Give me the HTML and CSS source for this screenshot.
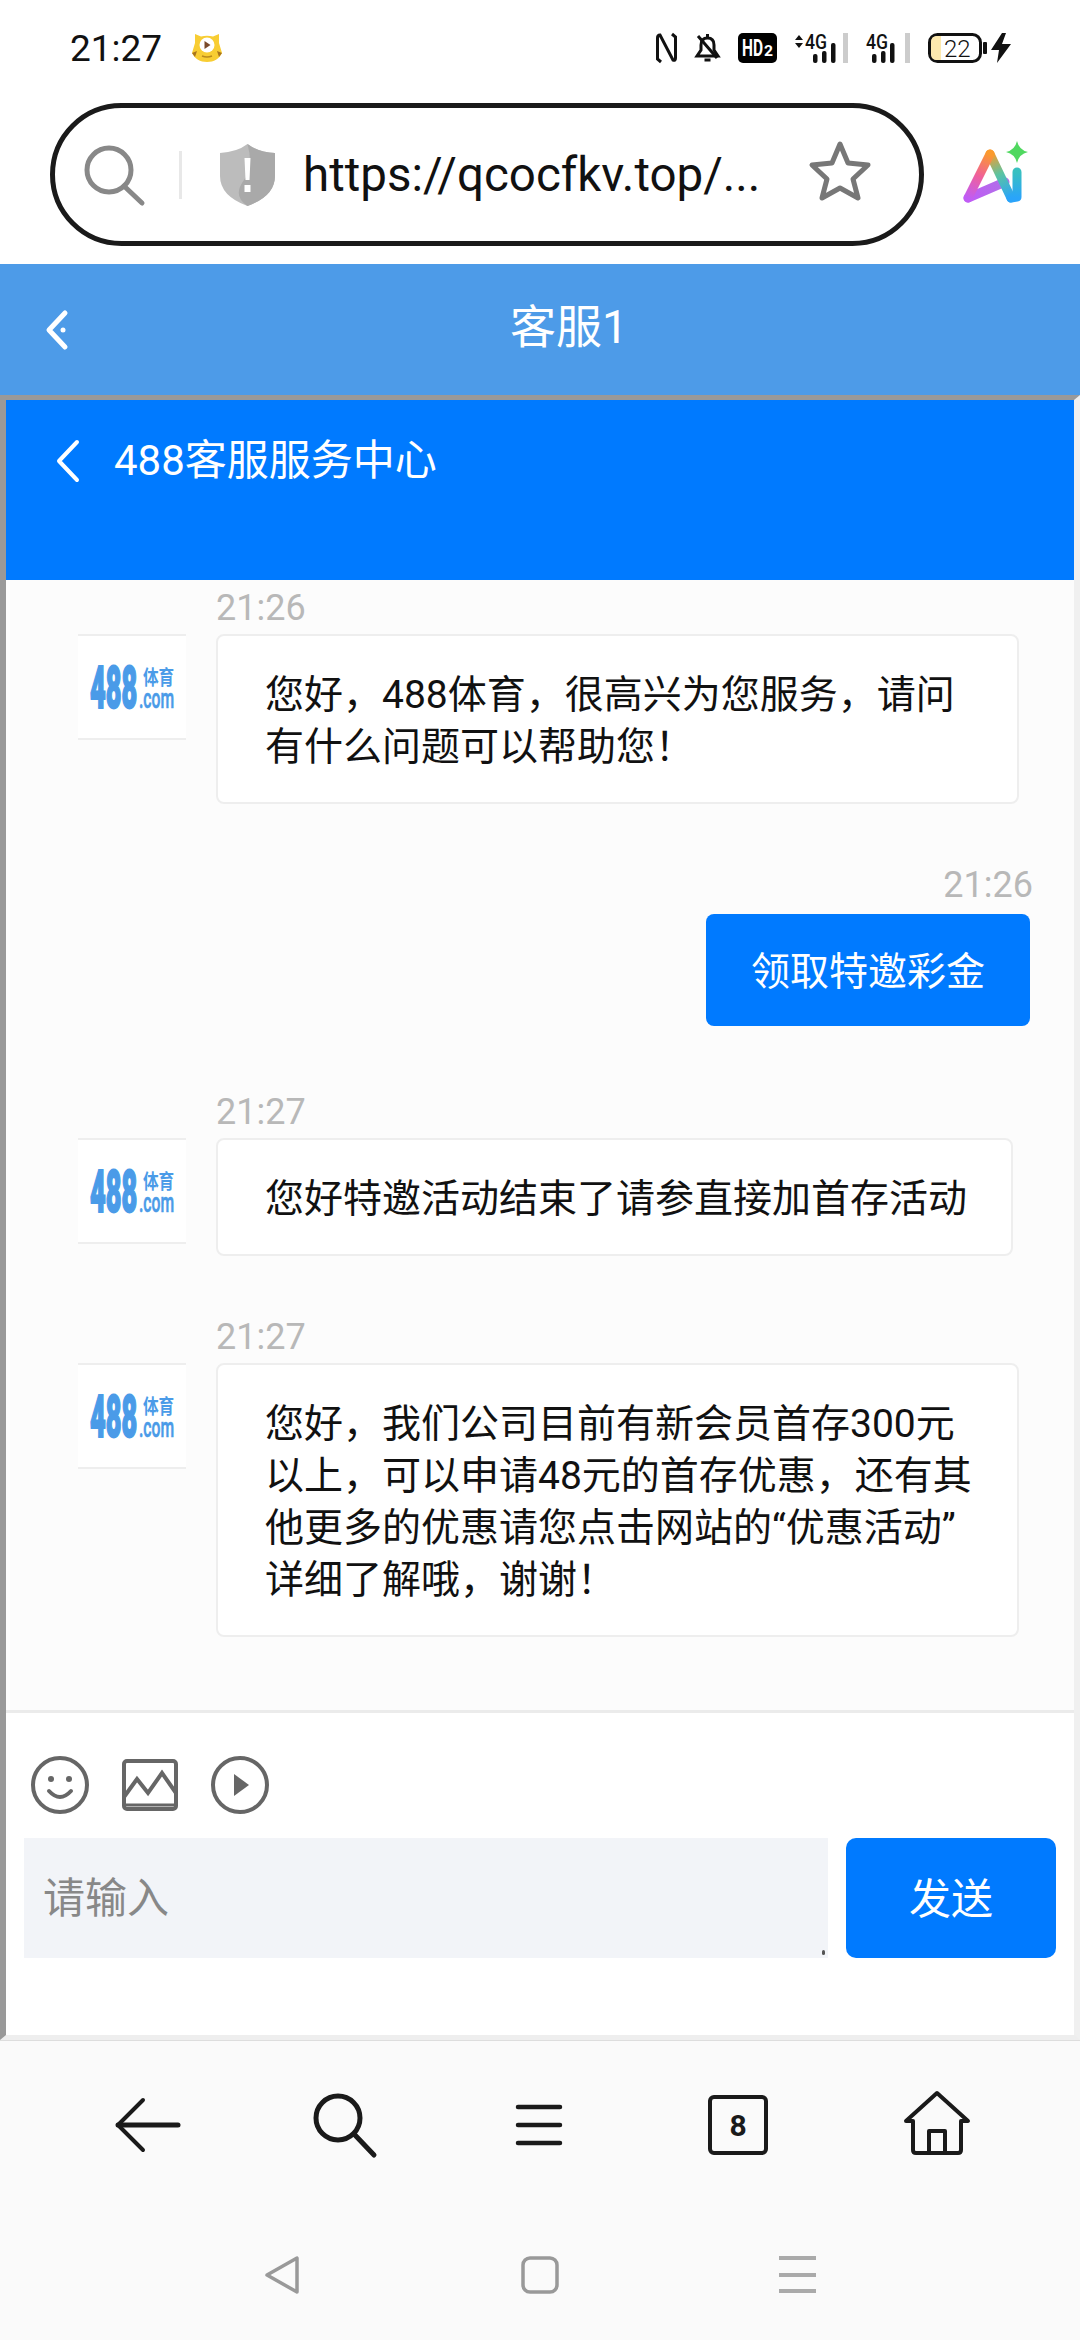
FILE: index.html
```html
<!DOCTYPE html>
<html lang="zh-CN">
<head>
    <meta charset="UTF-8">
    <meta name="viewport" content="width=device-width, initial-scale=1.0">
    <title>客服1</title>
    <link rel="stylesheet" href="styles.css">
</head>
<body>
    <!-- Status bar -->
    <div class="status-bar">
        <div class="status-left">
            <span class="clock">21:27</span>
            <svg class="mascot" width="30" height="28" viewBox="0 0 30 28">
                <path d="M3 0L9 2.500Q15 1 21 2.500L27 0L27 9L30 19C27 25 22 28 15 28S3 25 0 19L3 9Z" fill="#f8cd33"/>
                <path d="M0 19L3 23L5 17ZM30 19L27 23L25 17Z" fill="#a8741c"/>
                <circle cx="15" cy="11" r="7.500" fill="#fff"/>
                <path d="M12.500 7l6 4-6 4z" fill="#7a4a2a"/>
                <path d="M10 22q5 2 10 0" fill="none" stroke="#b98a1c" stroke-width="1.500"/>
            </svg>
        </div>
        <div class="status-right">
            <svg width="21" height="30" viewBox="0 0 21 30" fill="none" stroke="#111" stroke-width="3">
                <path d="M5 29L1.500 26V5Q1.500 2 4 2L17 27Q19.500 28 19.500 25V4L16 1"/>
            </svg>
            <svg width="25" height="30" viewBox="0 0 25 30" fill="none" stroke="#111" stroke-width="3">
                <path d="M6 12Q6 5 12.500 5T19 12V17L23 23H2L6 17Z"/>
                <path d="M3 3L22 25M12.500 1V4"/>
                <path d="M9.500 27h6" stroke-width="3"/>
            </svg>
            <svg width="39" height="30" viewBox="0 0 39 30">
                <rect width="39" height="30" rx="5" fill="#000"/>
                <text x="4" y="23" class="hd-text" textLength="21" lengthAdjust="spacingAndGlyphs">HD</text>
                <text x="26" y="23" class="hd-sub" textLength="9" lengthAdjust="spacingAndGlyphs">2</text>
            </svg>
            <svg width="53" height="30" viewBox="0 0 53 30">
                <path d="M0 7l4-5 4 5zM0 10l4 5 4-5z" fill="#111"/>
                <text x="10" y="16" class="net-text" textLength="22" lengthAdjust="spacingAndGlyphs">4G</text>
                <rect x="18" y="21" width="4.500" height="9" rx="2" fill="#111"/>
                <rect x="27" y="18" width="4.500" height="12" rx="2" fill="#111"/>
                <rect x="36" y="10" width="4.500" height="20" rx="2" fill="#111"/>
                <rect x="48" y="0" width="5" height="30" fill="#ccc"/>
            </svg>
            <svg width="44" height="30" viewBox="0 0 44 30">
                <text x="0" y="16" class="net-text" textLength="22" lengthAdjust="spacingAndGlyphs">4G</text>
                <rect x="6" y="21" width="4.500" height="9" rx="2" fill="#111"/>
                <rect x="15" y="18" width="4.500" height="12" rx="2" fill="#111"/>
                <rect x="24" y="10" width="4.500" height="20" rx="2" fill="#111"/>
                <rect x="39" y="0" width="5" height="30" fill="#ccc"/>
            </svg>
            <svg width="59" height="30" viewBox="0 0 59 30">
                <rect x="1.500" y="1.500" width="51" height="27" rx="8" fill="#fff" stroke="#111" stroke-width="3"/>
                <path d="M9 3h4v24H9q-6 0-6-6V9q0-6 6-6z" fill="#fde9ae"/>
                <text x="16" y="24" class="batt-text">22</text>
                <rect x="55" y="9" width="4" height="12" rx="1" fill="#111"/>
            </svg>
            <svg class="bolt" width="20" height="30" viewBox="0 0 20 30">
                <path d="M11 0L0 17H8L6 30L20 11H11L15 0Z" fill="#111"/>
            </svg>
        </div>
    </div>

    <!-- Browser address row -->
    <div class="address-row">
        <div class="url-pill">
            <svg class="pill-search" width="60" height="60" viewBox="0 0 60 60" fill="none" stroke="#888" stroke-width="5" stroke-linecap="round">
                <circle cx="25" cy="25" r="22"/>
                <path d="M40 41L58 58"/>
            </svg>
            <span class="pill-divider"></span>
            <svg class="pill-shield" width="55" height="62" viewBox="0 0 55 62">
                <path d="M27.500 0Q38 8 55 9V32Q55 52 27.500 62Q0 52 0 32V9Q17 8 27.500 0Z" fill="#bcbcbc"/>
                <path d="M27.500 0Q38 8 55 9V32Q55 52 27.500 62Q12 52 24 36Q34 24 27.500 0Z" fill="#a9a9a9"/>
                <path d="M24.500 14h6l-1 22h-4zM24.500 41h6v7h-6z" fill="#fff"/>
            </svg>
            <span class="url-text">https://qcocfkv.top/...</span>
            <svg class="pill-star" width="62" height="60" viewBox="0 0 62 60" fill="none" stroke="#777" stroke-width="5" stroke-linejoin="round">
                <path d="M31 3L39 22L59 24L44 38L49 57L31 47L13 57L18 38L3 24L23 22Z"/>
            </svg>
        </div>
        <svg class="ai-icon" width="66" height="70" viewBox="0 0 66 70" fill="none" stroke-width="9" stroke-linecap="round">
            <defs>
                <linearGradient id="ai-left" x1="7" y1="59" x2="29" y2="15" gradientUnits="userSpaceOnUse">
                    <stop offset="0" stop-color="#c05cf5"/>
                    <stop offset="0.500" stop-color="#f0609a"/>
                    <stop offset="1" stop-color="#fb9a2c"/>
                </linearGradient>
                <linearGradient id="ai-right" x1="29" y1="15" x2="50" y2="59" gradientUnits="userSpaceOnUse">
                    <stop offset="0" stop-color="#fb9a2c"/>
                    <stop offset="0.450" stop-color="#5cc4a0"/>
                    <stop offset="1" stop-color="#2aa4fa"/>
                </linearGradient>
                <linearGradient id="ai-bar" x1="7" y1="59" x2="44" y2="43" gradientUnits="userSpaceOnUse">
                    <stop offset="0" stop-color="#c05cf5"/>
                    <stop offset="1" stop-color="#b070e8"/>
                </linearGradient>
                <linearGradient id="ai-stem" x1="56" y1="33" x2="56" y2="59" gradientUnits="userSpaceOnUse">
                    <stop offset="0" stop-color="#38c0c0"/>
                    <stop offset="1" stop-color="#2aa4fa"/>
                </linearGradient>
            </defs>
            <path d="M7 59L44 43" stroke="url(#ai-bar)"/>
            <path d="M29 15L50 59" stroke="url(#ai-right)"/>
            <path d="M7 59L29 15" stroke="url(#ai-left)"/>
            <path d="M56 33V58L50 59" stroke="url(#ai-stem)" stroke-linejoin="round"/>
            <path d="M56 2Q58 11 67 13Q58 15 56 24Q54 15 45 13Q54 11 56 2Z" fill="#50d860" stroke="none"/>
        </svg>
    </div>

    <!-- App title -->
    <div class="title-bar">
        <svg class="title-back" width="22" height="40" viewBox="0 0 22 40" fill="none" stroke="#fff" stroke-width="5" stroke-linecap="round" stroke-linejoin="round">
            <path d="M19 3L3 20L19 37"/>
            <circle cx="17" cy="20" r="2.500" fill="#fff" stroke="none"/>
        </svg>
        <span class="title-text">客服1</span>
    </div>

    <div class="frame">
        <div class="chat-header">
            <svg width="24" height="42" viewBox="0 0 24 42" fill="none" stroke="#fff" stroke-width="4" stroke-linecap="round" stroke-linejoin="round">
                <path d="M21 2L3 21L21 40"/>
            </svg>
            <span class="chat-title">488客服服务中心</span>
        </div>

        <div class="chat-list">
            <div class="msg">
                <div class="avatar">
                    <svg width="86" height="46" viewBox="0 0 86 46">
                        <text transform="translate(1 44) scale(0.46 1)" class="logo-num">488</text>
                        <text transform="translate(54 21) scale(0.78 1)" class="logo-cn">体育</text>
                        <text transform="translate(50 44) scale(0.58 1)" class="logo-com">.com</text>
                    </svg>
                </div>
                <div class="msg-body">
                    <div class="msg-time">21:26</div>
                    <div class="bubble">您好，488体育，很高兴为您服务，请问有什么问题可以帮助您！</div>
                </div>
            </div>

            <div class="msg msg-mine">
                <div class="msg-body">
                    <div class="msg-time">21:26</div>
                    <div class="bubble bubble-mine">领取特邀彩金</div>
                </div>
            </div>

            <div class="msg">
                <div class="avatar">
                    <svg width="86" height="46" viewBox="0 0 86 46">
                        <text transform="translate(1 44) scale(0.46 1)" class="logo-num">488</text>
                        <text transform="translate(54 21) scale(0.78 1)" class="logo-cn">体育</text>
                        <text transform="translate(50 44) scale(0.58 1)" class="logo-com">.com</text>
                    </svg>
                </div>
                <div class="msg-body">
                    <div class="msg-time">21:27</div>
                    <div class="bubble">您好特邀活动结束了请参直接加首存活动</div>
                </div>
            </div>

            <div class="msg">
                <div class="avatar">
                    <svg width="86" height="46" viewBox="0 0 86 46">
                        <text transform="translate(1 44) scale(0.46 1)" class="logo-num">488</text>
                        <text transform="translate(54 21) scale(0.78 1)" class="logo-cn">体育</text>
                        <text transform="translate(50 44) scale(0.58 1)" class="logo-com">.com</text>
                    </svg>
                </div>
                <div class="msg-body">
                    <div class="msg-time">21:27</div>
                    <div class="bubble">您好，我们公司目前有新会员首存300元以上，可以申请48元的首存优惠，还有其他更多的优惠请您点击网站的“优惠活动”详细了解哦，谢谢！</div>
                </div>
            </div>
        </div>

        <div class="composer">
            <div class="composer-tools">
                <svg width="58" height="58" viewBox="0 0 58 58" fill="none" stroke="#666" stroke-width="4">
                    <circle cx="29" cy="29" r="27"/>
                    <circle cx="20" cy="23" r="3" fill="#666" stroke="none"/>
                    <circle cx="38" cy="23" r="3" fill="#666" stroke="none"/>
                    <path d="M18 35Q29 47 40 35" stroke-linecap="round"/>
                </svg>
                <svg width="56" height="52" viewBox="0 0 56 52" fill="none" stroke="#666" stroke-width="4">
                    <rect x="2" y="2" width="52" height="48" rx="3"/>
                    <path d="M2 38L15 20L26 34L40 14L54 34"/>
                    <path d="M2 46H54" stroke-width="3"/>
                </svg>
                <svg width="58" height="58" viewBox="0 0 58 58" fill="none" stroke="#666" stroke-width="4">
                    <circle cx="29" cy="29" r="27"/>
                    <path d="M23 18L38 29L23 40Z" fill="#666" stroke="none"/>
                </svg>
            </div>
            <div class="composer-input">
                <div class="input-wrap">
                    <textarea class="input-box" placeholder="请输入"></textarea>
                </div>
                <button class="send-btn">发送</button>
            </div>
        </div>
    </div>

    <!-- Browser toolbar and system keys -->
    <div class="bottom-area">
        <div class="browser-nav">
            <svg width="70" height="70" viewBox="0 0 70 70" fill="none" stroke="#1a1a1a" stroke-width="4" stroke-linecap="round" stroke-linejoin="round">
                <path d="M29 10L4 35L29 60"/>
                <path d="M4 35H64" stroke-width="5"/>
            </svg>
            <svg width="70" height="70" viewBox="0 0 70 70" fill="none" stroke="#1a1a1a" stroke-width="5" stroke-linecap="round">
                <circle cx="27" cy="28" r="22"/>
                <path d="M43 44L63 65"/>
            </svg>
            <svg width="70" height="70" viewBox="0 0 70 70" fill="none" stroke="#1a1a1a" stroke-width="4.500" stroke-linecap="round">
                <path d="M10 17H52M10 35H52M10 53H52"/>
            </svg>
            <svg width="70" height="70" viewBox="0 0 70 70">
                <rect x="5" y="7" width="56" height="56" rx="4" fill="none" stroke="#1a1a1a" stroke-width="4"/>
                <text x="33" y="46" class="tab-count" text-anchor="middle">8</text>
            </svg>
            <svg width="70" height="70" viewBox="0 0 70 70" fill="none" stroke="#1a1a1a" stroke-width="4" stroke-linecap="round" stroke-linejoin="round">
                <path d="M4 31L35 3L66 31H59V60Q59 63 56 63H14Q11 63 11 60V31Z"/>
                <path d="M27 63V41H43V63"/>
            </svg>
        </div>
        <div class="system-nav">
            <svg width="40" height="40" viewBox="0 0 40 40" fill="none" stroke="#999" stroke-width="3.500" stroke-linejoin="round">
                <path d="M35 3V37L5 20Z"/>
            </svg>
            <svg width="40" height="40" viewBox="0 0 40 40" fill="none" stroke="#999" stroke-width="3.500">
                <rect x="3" y="3" width="34" height="34" rx="7"/>
            </svg>
            <svg width="40" height="40" viewBox="0 0 40 40" fill="none" stroke="#aaa" stroke-width="4">
                <path d="M1 3H38M1 20H38M1 36H38"/>
            </svg>
        </div>
    </div>
</body>
</html>
```

FILE: styles.css
```css
* {
    box-sizing: border-box;
}
body {
    margin: 0;
    width: 1080px;
    height: 2340px;
    overflow: hidden;
    background: #fff;
    font-family: Roboto, "Noto Sans CJK SC", sans-serif;
    color: #000;
}
svg {
    display: block;
    flex-shrink: 0;
    overflow: visible;
}

/* status bar */
.status-bar {
    height: 88px;
    padding: 8px 69px 0 70px;
    display: flex;
    align-items: center;
    justify-content: space-between;
}
.status-left {
    display: flex;
    align-items: center;
    gap: 30px;
}
.clock {
    font-size: 37px;
    color: #111;
}
.status-right {
    display: flex;
    align-items: center;
    gap: 18px;
}
.hd-text {
    font: 700 23px Roboto, sans-serif;
    fill: #fff;
}
.hd-sub {
    font: 700 14px Roboto, sans-serif;
    fill: #fff;
}
.net-text {
    font: 500 20px Roboto, sans-serif;
    fill: #111;
}
.batt-text {
    font: 300 24px Roboto, sans-serif;
    fill: #111;
}
.bolt {
    margin-left: -14px;
}

/* address row */
.address-row {
    height: 176px;
    padding: 15px 0 0 50px;
    display: flex;
    align-items: flex-start;
}
.url-pill {
    width: 874px;
    height: 143px;
    border: 5px solid #1a1a1a;
    border-radius: 72px;
    display: flex;
    align-items: center;
    padding-left: 29px;
}
.pill-divider {
    width: 3px;
    height: 48px;
    margin-left: 35px;
    background: #e8e8e8;
}
.pill-shield {
    margin-left: 38px;
}
.url-text {
    width: 506px;
    margin-left: 28px;
    font-size: 47.500px;
    color: #111;
    white-space: nowrap;
}
.pill-star {
    margin-top: -8px;
}
.ai-icon {
    margin: 36px 0 0 37px;
}

/* title bar */
.title-bar {
    height: 131px;
    background: #4d9be8;
    display: flex;
    align-items: center;
    padding-left: 46px;
}
.title-text {
    flex: 1;
    text-align: center;
    margin-left: -10px;
    margin-top: -14px;
    font-size: 46px;
    color: #fff;
}

/* page inside the browser */
.frame {
    height: 1645px;
    border-top: 5px solid #999;
    border-left: 6px solid #999;
    border-right: 6px solid #f0f0f0;
    border-bottom: 5px solid #eee;
    display: flex;
    flex-direction: column;
}
.chat-header {
    height: 180px;
    background: #007aff;
    padding: 40px 0 0 50px;
    display: flex;
    align-items: flex-start;
    gap: 34px;
}
.chat-title {
    font-size: 42px;
    line-height: 42px;
    color: #fff;
}

/* messages */
.chat-list {
    height: 1133px;
    padding-top: 13px;
    background: #fcfcfc;
    border-bottom: 3px solid #ebebeb;
}
.msg {
    display: flex;
    margin-bottom: 66px;
}
.avatar {
    width: 108px;
    height: 106px;
    margin: 41px 30px 0 72px;
    background: #fff;
    border-top: 2px solid #eee;
    border-bottom: 2px solid #eee;
    display: flex;
    align-items: center;
    justify-content: center;
}
.logo-num {
    font: 900 59px Roboto, sans-serif;
    fill: #4a9be8;
    stroke: #4a9be8;
    stroke-width: 2;
}
.logo-cn {
    font: 700 20px "Noto Sans CJK SC", sans-serif;
    fill: #4a9be8;
}
.logo-com {
    font: 500 27px Roboto, sans-serif;
    fill: #4a9be8;
    stroke: #4a9be8;
    stroke-width: 0.600;
}
.msg-time {
    height: 30px;
    margin-bottom: 11px;
    font-size: 36px;
    line-height: 30px;
    color: #b8b8b8;
}
.bubble {
    width: fit-content;
    max-width: 803px;
    padding: 33px 44px 29px 47px;
    background: #fff;
    border: 2px solid #eee;
    border-radius: 8px;
    font-size: 39px;
    line-height: 52px;
    color: #111;
}
.msg-mine {
    justify-content: flex-end;
    padding-right: 44px;
    margin-bottom: 71px;
}
.msg-mine .msg-time {
    text-align: right;
    margin: 0 -3px 14px 0;
}
.bubble-mine {
    padding: 32px 45px 28px;
    background: #007aff;
    border: none;
    color: #fff;
}

/* composer */
.composer {
    flex: 1;
    background: #fff;
    padding: 44px 18px 0;
}
.composer-tools {
    height: 56px;
    padding-left: 7px;
    display: flex;
    align-items: center;
    gap: 33px;
}
.composer-input {
    margin-top: 25px;
    display: flex;
    gap: 18px;
}
.input-wrap {
    flex: 1;
    height: 120px;
    position: relative;
}
/* the little drag mark in the corner */
.input-wrap::after {
    content: "";
    position: absolute;
    right: 3px;
    bottom: 3px;
    width: 3px;
    height: 5px;
    border-radius: 2px;
    background: #555;
}
.input-box {
    display: block;
    width: 100%;
    height: 100%;
    padding: 37px 19px 0;
    border: none;
    border-radius: 0;
    background: #f2f4f8;
    font-family: Roboto, "Noto Sans CJK SC", sans-serif;
    font-size: 42px;
    line-height: 48px;
    color: #333;
    resize: none;
}
.input-box::placeholder {
    color: #888;
}
.send-btn {
    width: 210px;
    height: 120px;
    padding: 0 0 6px;
    border: none;
    border-radius: 10px;
    background: #007aff;
    font-family: Roboto, "Noto Sans CJK SC", sans-serif;
    font-size: 42px;
    color: #fff;
}

/* bottom nav */
.bottom-area {
    height: 301px;
    border-top: 1px solid #ddd;
    background: #fafafa;
}
.browser-nav {
    padding: 49px 0 0 50px;
    display: grid;
    grid-template-columns: repeat(5, 197px);
    justify-items: center;
}
.system-nav {
    margin-top: 95px;
    padding-left: 153px;
    display: grid;
    grid-template-columns: repeat(3, 258px);
    justify-items: center;
}
.tab-count {
    font: 700 30px Roboto, sans-serif;
    fill: #1a1a1a;
}
```
